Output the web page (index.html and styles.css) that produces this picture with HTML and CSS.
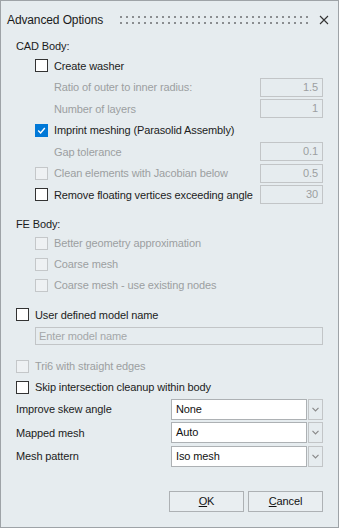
FILE: index.html
```html
<!DOCTYPE html>
<html lang="en">
    <head>
        <meta charset="UTF-8" />
        <title>Advanced Options</title>
        <link rel="stylesheet" href="styles.css">
    </head>
    <body>
        <div class="dialog">
            <div class="titlebar">
                <span class="title">Advanced Options</span>
                <svg class="grip" width="190" height="8" viewBox="0 0 190 8">
                    <defs>
                        <pattern id="dots" width="6" height="6" patternUnits="userSpaceOnUse">
                            <rect x="0" y="0" width="2" height="2" fill="#8a8d90" />
                        </pattern>
                    </defs>
                    <rect x="0" y="0" width="190" height="8" fill="url(#dots)" />
                </svg>
                <svg class="close" width="10" height="10" viewBox="0 0 10 10">
                    <path d="M1 1 L9 9 M9 1 L1 9" stroke="#333" stroke-width="1.1" fill="none" />
                </svg>
            </div>

            <div class="content">
                <!-- CAD 섹션 -->
                <div class="section-label">CAD Body:</div>
                <div class="row lvl1"><span class="cb"></span><span>Create washer</span></div>
                <div class="row lvl2 disabled"><span class="label">Ratio of outer to inner radius:</span><span class="num">1.5</span></div>
                <div class="row lvl2 disabled"><span class="label">Number of layers</span><span class="num">1</span></div>
                <div class="row lvl1"><span class="cb checked"><svg width="9" height="9" viewBox="0 0 9 9"><path d="M1.2 4.6 L3.6 7 L7.8 2" stroke="#fff" stroke-width="1.4" fill="none" /></svg></span><span>Imprint meshing (Parasolid Assembly)</span></div>
                <div class="row lvl2 disabled"><span class="label">Gap tolerance</span><span class="num">0.1</span></div>
                <div class="row lvl1 disabled"><span class="cb"></span><span class="label">Clean elements with Jacobian below</span><span class="num">0.5</span></div>
                <div class="row lvl1"><span class="cb"></span><span class="label">Remove floating vertices exceeding angle</span><span class="num off">30</span></div>

                <!-- FE 섹션 -->
                <div class="section-label fe">FE Body:</div>
                <div class="row short lvl1 disabled"><span class="cb"></span><span>Better geometry approximation</span></div>
                <div class="row short lvl1 disabled"><span class="cb"></span><span>Coarse mesh</span></div>
                <div class="row short lvl1 disabled"><span class="cb"></span><span>Coarse mesh - use existing nodes</span></div>

                <div class="row model"><span class="cb"></span><span>User defined model name</span></div>
                <div class="name-box">Enter model name</div>

                <div class="row short tri disabled"><span class="cb"></span><span>Tri6 with straight edges</span></div>
                <div class="row short"><span class="cb"></span><span>Skip intersection cleanup within body</span></div>

                <!-- 콤보 -->
                <div class="combo-row">
                    <span class="label">Improve skew angle</span>
                    <span class="combo"><span class="field">None</span><span class="arrow"><svg width="7" height="5" viewBox="0 0 7 5"><path d="M0.5 0.8 L3.5 3.8 L6.5 0.8" stroke="#8a8a8a" stroke-width="1.2" fill="none" /></svg></span></span>
                </div>
                <div class="combo-row">
                    <span class="label">Mapped mesh</span>
                    <span class="combo"><span class="field">Auto</span><span class="arrow"><svg width="7" height="5" viewBox="0 0 7 5"><path d="M0.5 0.8 L3.5 3.8 L6.5 0.8" stroke="#8a8a8a" stroke-width="1.2" fill="none" /></svg></span></span>
                </div>
                <div class="combo-row">
                    <span class="label">Mesh pattern</span>
                    <span class="combo"><span class="field">Iso mesh</span><span class="arrow"><svg width="7" height="5" viewBox="0 0 7 5"><path d="M0.5 0.8 L3.5 3.8 L6.5 0.8" stroke="#8a8a8a" stroke-width="1.2" fill="none" /></svg></span></span>
                </div>

                <div class="buttons">
                    <span class="btn"><u>O</u>K</span>
                    <span class="btn"><u>C</u>ancel</span>
                </div>
            </div>
        </div>
    </body>
</html>
```

FILE: styles.css
```css
body {
    margin: 0;
    font-family: "Liberation Sans", Arial, sans-serif;
    font-size: 11px;
    letter-spacing: -0.12px;
    color: #1c1c1c;
}
.dialog {
    width: 339px;
    height: 528px;
    box-sizing: border-box;
    border: 1px solid #9ea3a7;
    background-color: #e6ecef;
}
.titlebar {
    height: 35px;
    box-sizing: border-box;
    padding: 3px 9px 0 6px;
    display: flex;
    align-items: center;
}
.title {
    font-size: 12px;
    color: #1a1a1a;
    width: 113px;
}
.grip {
    margin-top: -1px;
}
.close {
    margin-left: auto;
    margin-top: -1px;
}
.content {
    padding: 0 15px;
}
.section-label {
    height: 18px;
    margin-top: 1px;
    display: flex;
    align-items: center;
}
.section-label.fe {
    margin-top: 9px;
}
.row {
    height: 21.5px;
    display: flex;
    align-items: center;
}
.row.short {
    height: 21px;
}
.lvl1 {
    padding-left: 19px;
}
.lvl2 {
    padding-left: 38px;
}
.disabled {
    color: #9c9fa1;
}
.label {
    flex: 1;
}
.cb {
    width: 13px;
    height: 13px;
    box-sizing: border-box;
    border: 1px solid #333;
    background-color: #fff;
    margin-right: 6px;
    display: flex;
    align-items: center;
    justify-content: center;
    flex-shrink: 0;
}
.disabled .cb {
    border-color: #c4c7c9;
    background-color: #eef1f3;
}
.cb.checked {
    background-color: #0078d7;
    border-color: #0078d7;
}
.num {
    width: 63px;
    height: 19px;
    box-sizing: border-box;
    border: 1px solid #c2c5c7;
    text-align: right;
    padding-right: 4px;
    line-height: 17px;
    color: #9c9fa1;
}
.model {
    margin-top: 8.5px;
}
.name-box {
    margin: 1px 0 0 19px;
    height: 18px;
    box-sizing: border-box;
    border: 1px solid #c2c5c7;
    padding-left: 3px;
    line-height: 16px;
    color: #a4a7a9;
}
.tri {
    margin-top: 11px;
}
.combo-row {
    height: 23.5px;
    display: flex;
    align-items: center;
}
.combo-row:first-of-type {
    margin-top: 1px;
}
.combo {
    display: flex;
    height: 21px;
}
.field {
    width: 136px;
    box-sizing: border-box;
    border: 1px solid #adb1b4;
    background-color: #fff;
    padding-left: 4px;
    line-height: 19px;
    color: #111;
}
.arrow {
    width: 15px;
    margin-left: 1px;
    box-sizing: border-box;
    border: 1px solid #c2c5c7;
    display: flex;
    align-items: center;
    justify-content: center;
}
.buttons {
    margin-top: 23px;
    display: flex;
    justify-content: flex-end;
    gap: 4px;
}
.btn {
    width: 75px;
    height: 21px;
    box-sizing: border-box;
    border: 1px solid #adb1b4;
    background-color: #e9eef1;
    text-align: center;
    line-height: 19px;
    color: #111;
}
```
